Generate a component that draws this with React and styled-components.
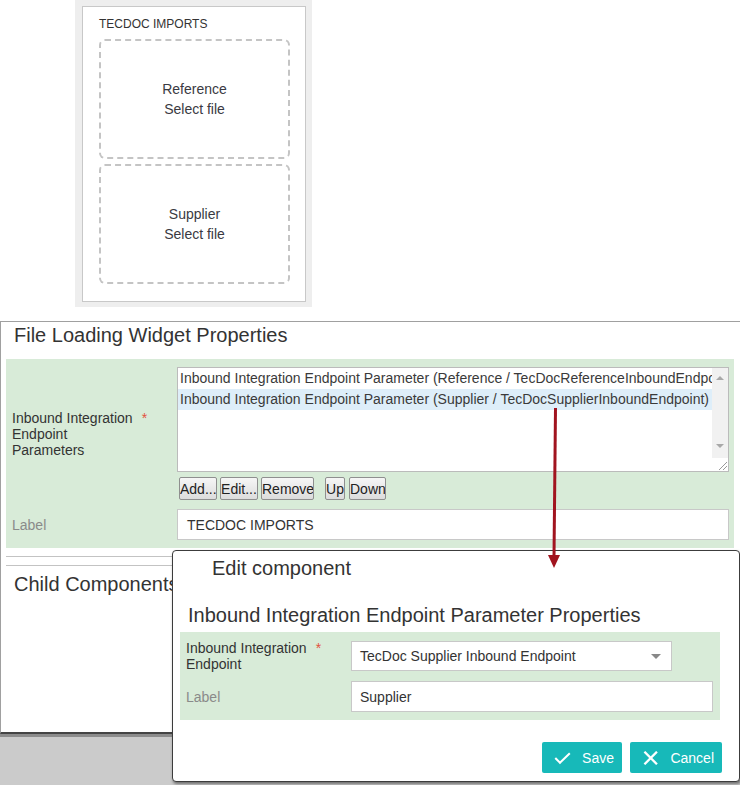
import styled, { createGlobalStyle } from "styled-components";

const GlobalStyle = createGlobalStyle`
  html, body {
    margin: 0;
    padding: 0;
    background: #fff;
  }
  body {
    font-family: "Liberation Sans", Arial, sans-serif;
    color: #333;
  }
`;

const Page = styled.div`
  position: relative;
  width: 740px;
  height: 785px;
  overflow: hidden;
  display: flex;
  flex-direction: column;
`;

const PreviewArea = styled.div`
  flex: none;
  padding-left: 75px;
`;

const PreviewFrame = styled.div`
  width: 237px;
  height: 307px;
  box-sizing: border-box;
  background: #eeeeee;
  padding: 6px 6px 5px 7px;
`;

const WidgetCard = styled.div`
  height: 100%;
  box-sizing: border-box;
  background: #fff;
  border: 1px solid #c8c8c8;
  padding: 10px 15px 0 16px;
  display: flex;
  flex-direction: column;
  gap: 5px;
`;

const CardTitle = styled.div`
  font-size: 12px;
  line-height: 14px;
  color: #333;
  margin-bottom: 3px;
`;

const DropZone = styled.div`
  height: 120px;
  box-sizing: border-box;
  border: 2px dashed #c4c4c4;
  border-radius: 6px;
  display: flex;
  flex-direction: column;
  align-items: center;
  justify-content: center;
  font-size: 14px;
  line-height: 20px;
  color: #3a3a42;
`;

const Panel = styled.div`
  flex: none;
  margin-top: 14px;
  height: 413px;
  box-sizing: border-box;
  border-top: 1px solid #a0a0a0;
  border-left: 1px solid #a0a0a0;
  border-bottom: 2px solid #444;
  background: #fff;
`;

const Heading = styled.div`
  font-size: 20px;
  line-height: 24px;
  color: #333;
  padding: ${(p) => p.pad || "1px 13px 12px"};
  margin-top: ${(p) => p.top || 0}px;
`;

const FormSection = styled.div`
  margin: ${(p) => p.margin || "0 6px 0 5px"};
  background: #d8ebd8;
  padding: ${(p) => p.pad || "8px 5px 8px 6px"};
  display: flex;
  flex-direction: column;
  gap: ${(p) => p.gap || 9}px;
`;

const FieldRow = styled.div`
  display: grid;
  grid-template-columns: 165px minmax(0, 1fr);
  align-items: center;
`;

const FieldLabel = styled.div`
  font-size: 14px;
  line-height: 16px;
  color: ${(p) => (p.muted ? "#8a8a8a" : "#333")};
`;

const Req = styled.span`
  color: #e3513f;
  margin-left: 9px;
`;

const ListBox = styled.div`
  height: 105px;
  box-sizing: border-box;
  border: 1px solid #bbb;
  background: #fff;
  display: flex;
  overflow: hidden;
`;

const ItemList = styled.div`
  flex: 1;
  min-width: 0;
`;

const ListItem = styled.div`
  height: 21px;
  line-height: 20px;
  padding-left: 2px;
  white-space: nowrap;
  overflow: hidden;
  font-size: 14px;
  color: #3a3a3a;
  background: ${(p) => (p.selected ? "#deeef9" : "transparent")};
`;

const ScrollColumn = styled.div`
  width: 16px;
  flex: none;
  display: flex;
  flex-direction: column;
`;

const ScrollTrack = styled.div`
  flex: 1;
  background: #f1f1f1;
  display: flex;
  flex-direction: column;
  justify-content: space-between;
  align-items: center;
  padding: 8px 0 10px;
`;

const ScrollArrow = styled.div`
  width: 0;
  height: 0;
  border-left: 4px solid transparent;
  border-right: 4px solid transparent;
  ${(p) =>
    p.down ? "border-top: 4px solid #a8a8a8;" : "border-bottom: 4px solid #a8a8a8;"}
`;

const ScrollCorner = styled.div`
  height: 13px;
  display: flex;
  justify-content: flex-end;
  align-items: flex-end;
`;

const ButtonBar = styled.div`
  display: flex;
  margin-top: 5px;
  padding-left: 2px;
`;

const MiniButton = styled.button`
  height: 23px;
  width: ${(p) => p.w}px;
  box-sizing: border-box;
  font-family: "Liberation Sans", Arial, sans-serif;
  font-size: 14px;
  color: #222;
  padding: 0;
  border: 1px solid #8f8f8f;
  border-radius: 2px;
  background: linear-gradient(#f6f6f6, #dcdcdc);
  margin-right: ${(p) => p.gap || 3}px;
  white-space: nowrap;
  overflow: hidden;
`;

const TextBox = styled.div`
  height: ${(p) => p.h || 31}px;
  width: ${(p) => (p.w ? `${p.w}px` : "auto")};
  box-sizing: border-box;
  border: 1px solid #c8c8c8;
  background: #fff;
  padding: ${(p) => p.pad || "0 9px"};
  font-size: 14px;
  color: #333;
  display: flex;
  align-items: center;
  justify-content: space-between;
`;

const Caret = styled.div`
  width: 0;
  height: 0;
  border-left: 5px solid transparent;
  border-right: 5px solid transparent;
  border-top: 5px solid #888;
`;

const Rule = styled.div`
  height: 1px;
  background: #c3c3c3;
  margin: 8px 0 0 5px;
`;

const Footer = styled.div`
  flex: 1;
  background: #cbcbcb;
  border-top: 3px solid #8c8c8c;
`;

const Dialog = styled.div`
  position: absolute;
  left: 172px;
  top: 550px;
  width: 568px;
  height: 232px;
  box-sizing: border-box;
  border: 1px solid #3c3c3c;
  border-radius: 4px;
  background: #fff;
  box-shadow: 1px 2px 3px rgba(0, 0, 0, 0.45);
  display: flex;
  flex-direction: column;
`;

const DialogActions = styled.div`
  display: flex;
  justify-content: flex-end;
  gap: 8px;
  margin-top: 22px;
  padding-right: 17px;
`;

const ActionButton = styled.button`
  height: 31px;
  box-sizing: border-box;
  border: none;
  border-radius: 2px;
  background: #17b9b9;
  color: #fff;
  font-family: "Liberation Sans", Arial, sans-serif;
  font-size: 14px;
  display: flex;
  align-items: center;
  gap: ${(p) => p.gap || 11}px;
  padding: 0 8px 0 ${(p) => p.left || 12}px;
  width: ${(p) => p.w}px;
`;

const ArrowOverlay = styled.svg`
  position: absolute;
  left: 540px;
  top: 400px;
`;

const Grip = () => (
  <svg width="12" height="12" viewBox="0 0 12 12">
    <line x1="11" y1="3" x2="3" y2="11" stroke="#999" strokeWidth="1" />
    <line x1="11" y1="7" x2="7" y2="11" stroke="#999" strokeWidth="1" />
  </svg>
);

const CheckIcon = () => (
  <svg width="20" height="14" viewBox="0 0 20 14">
    <polyline
      points="1.5,7 7,12.5 18.5,1.5"
      fill="none"
      stroke="#fff"
      strokeWidth="2.4"
    />
  </svg>
);

const CloseIcon = () => (
  <svg width="16" height="14" viewBox="0 0 16 14">
    <line x1="1.5" y1="0.5" x2="14.5" y2="13.5" stroke="#fff" strokeWidth="2.4" />
    <line x1="14.5" y1="0.5" x2="1.5" y2="13.5" stroke="#fff" strokeWidth="2.4" />
  </svg>
);

const items = [
  "Inbound Integration Endpoint Parameter (Reference / TecDocReferenceInboundEndpoint)",
  "Inbound Integration Endpoint Parameter (Supplier / TecDocSupplierInboundEndpoint)",
];

export default function App() {
  return (
    <>
      <GlobalStyle />
      <Page>
        <PreviewArea>
          <PreviewFrame>
            <WidgetCard>
              <CardTitle>TECDOC IMPORTS</CardTitle>
              <DropZone>
                <span>Reference</span>
                <span>Select file</span>
              </DropZone>
              <DropZone>
                <span>Supplier</span>
                <span>Select file</span>
              </DropZone>
            </WidgetCard>
          </PreviewFrame>
        </PreviewArea>

        <Panel>
          <Heading>File Loading Widget Properties</Heading>
          <FormSection>
            <FieldRow>
              <FieldLabel>
                Inbound Integration<Req>*</Req>
                <br />
                Endpoint
                <br />
                Parameters
              </FieldLabel>
              <div>
                <ListBox>
                  <ItemList>
                    {items.map((text, i) => (
                      <ListItem key={text} selected={i === 1}>
                        {text}
                      </ListItem>
                    ))}
                  </ItemList>
                  <ScrollColumn>
                    <ScrollTrack>
                      <ScrollArrow />
                      <ScrollArrow down />
                    </ScrollTrack>
                    <ScrollCorner>
                      <Grip />
                    </ScrollCorner>
                  </ScrollColumn>
                </ListBox>
                <ButtonBar>
                  <MiniButton w={38}>Add...</MiniButton>
                  <MiniButton w={38}>Edit...</MiniButton>
                  <MiniButton w={53} gap={11}>Remove</MiniButton>
                  <MiniButton w={20} gap={4}>Up</MiniButton>
                  <MiniButton w={37}>Down</MiniButton>
                </ButtonBar>
              </div>
            </FieldRow>
            <FieldRow>
              <FieldLabel muted>Label</FieldLabel>
              <TextBox>TECDOC IMPORTS</TextBox>
            </FieldRow>
          </FormSection>
          <Rule />
          <Rule />
          <Heading pad="0 13px" top={6}>
            Child Components
          </Heading>
        </Panel>
        <Footer />

        <Dialog>
          <Heading pad="5px 0 0 39px">Edit component</Heading>
          <Heading pad="0 0 0 15px" top={23}>
            Inbound Integration Endpoint Parameter Properties
          </Heading>
          <FormSection margin="5px 19px 0 7px" pad="8px 7px 8px 6px" gap={9}>
            <FieldRow>
              <FieldLabel>
                Inbound Integration<Req>*</Req>
                <br />
                Endpoint
              </FieldLabel>
              <TextBox h={30} w={321} pad="0 10px 0 8px">
                <span>TecDoc Supplier Inbound Endpoint</span>
                <Caret />
              </TextBox>
            </FieldRow>
            <FieldRow>
              <FieldLabel muted>Label</FieldLabel>
              <TextBox h={31} pad="0 8px">
                Supplier
              </TextBox>
            </FieldRow>
          </FormSection>
          <DialogActions>
            <ActionButton w={80}>
              <CheckIcon />
              Save
            </ActionButton>
            <ActionButton w={92} gap={12} left={13}>
              <CloseIcon />
              Cancel
            </ActionButton>
          </DialogActions>
        </Dialog>

        <ArrowOverlay width="30" height="175" viewBox="540 400 30 175">
          <line x1="555.5" y1="408" x2="554" y2="557" stroke="#a1141f" strokeWidth="3" />
          <polygon points="548,555 560,555 554,568" fill="#a1141f" />
        </ArrowOverlay>
      </Page>
    </>
  );
}
